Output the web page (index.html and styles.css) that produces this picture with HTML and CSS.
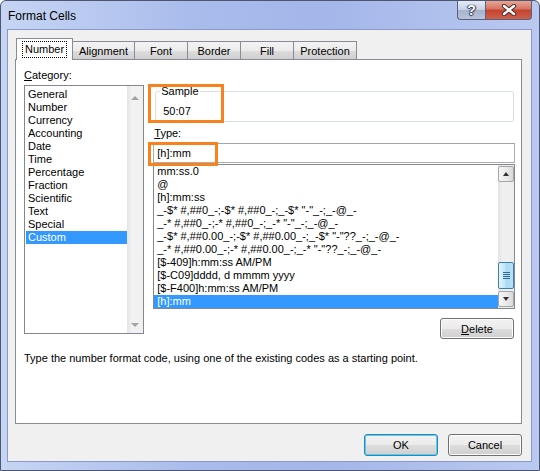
FILE: index.html
```html
<!DOCTYPE html>
<html>
<head>
    <title>Format Cells</title>
    <link rel="stylesheet" href="styles.css">
</head>
<body>
    <div class="window">
        <div class="titlebar">
            <span class="title">Format Cells</span>
            <div class="caption-buttons">
                <div class="cap help">?</div>
                <div class="cap close">
                    <svg width="16" height="12" viewBox="0 0 16 12">
                        <path d="M3 2 L13 10 M13 2 L3 10" stroke="#4a2a26" stroke-width="4.4" stroke-linecap="round"/>
                        <path d="M3 2 L13 10 M13 2 L3 10" stroke="#ffffff" stroke-width="2.4" stroke-linecap="round"/>
                    </svg>
                </div>
            </div>
        </div>

        <div class="client">
            <div class="tabs">
                <div class="tab active"><span class="focus">Number</span></div>
                <div class="tab w-align">Alignment</div>
                <div class="tab w-font">Font</div>
                <div class="tab w-font">Border</div>
                <div class="tab w-font">Fill</div>
                <div class="tab w-prot">Protection</div>
            </div>

            <div class="panel">
                <div class="columns">
                    <div class="left">
                        <div class="label"><u>C</u>ategory:</div>
                        <div class="cat-list">
                            <div class="items">
                                <div class="item">General</div>
                                <div class="item">Number</div>
                                <div class="item">Currency</div>
                                <div class="item">Accounting</div>
                                <div class="item">Date</div>
                                <div class="item">Time</div>
                                <div class="item">Percentage</div>
                                <div class="item">Fraction</div>
                                <div class="item">Scientific</div>
                                <div class="item">Text</div>
                                <div class="item">Special</div>
                                <div class="item selected">Custom</div>
                            </div>
                            <div class="scroll-off">
                                <span class="arrow-up grey"></span>
                                <span class="arrow-down grey"></span>
                            </div>
                        </div>
                    </div>

                    <div class="right">
                        <div class="group">
                            <div class="legend">Sample</div>
                            <div class="sample">50:07</div>
                        </div>
                        <div class="label type-label"><u>T</u>ype:</div>
                        <div class="type-input">[h]:mm</div>
                        <div class="fmt-list">
                            <div class="items">
                                <div class="item">mm:ss.0</div>
                                <div class="item">@</div>
                                <div class="item">[h]:mm:ss</div>
                                <div class="item">_-$* #,##0_-;-$* #,##0_-;_-$* "-"_-;_-@_-</div>
                                <div class="item">_-* #,##0_-;-* #,##0_-;_-* "-"_-;_-@_-</div>
                                <div class="item">_-$* #,##0.00_-;-$* #,##0.00_-;_-$* "-"??_-;_-@_-</div>
                                <div class="item">_-* #,##0.00_-;-* #,##0.00_-;_-* "-"??_-;_-@_-</div>
                                <div class="item">[$-409]h:mm:ss AM/PM</div>
                                <div class="item">[$-C09]dddd, d mmmm yyyy</div>
                                <div class="item">[$-F400]h:mm:ss AM/PM</div>
                                <div class="item selected">[h]:mm</div>
                            </div>
                            <div class="scrollbar">
                                <div class="sb-btn"><span class="arrow-up"></span></div>
                                <div class="sb-track">
                                    <div class="thumb"><span class="grip"></span></div>
                                </div>
                                <div class="sb-btn"><span class="arrow-down"></span></div>
                            </div>
                        </div>
                        <div class="delete-row">
                            <button class="btn delete"><u>D</u>elete</button>
                        </div>

                        <div class="mark mark-sample"></div>
                        <div class="mark mark-type"></div>
                    </div>
                </div>
                <p class="desc">Type the number format code, using one of the existing codes as a starting point.</p>
            </div>

            <div class="footer">
                <button class="btn default">OK</button>
                <button class="btn">Cancel</button>
            </div>
        </div>
    </div>
</body>
</html>
```

FILE: styles.css
```css
body {
    margin: 0;
    font-family: "Liberation Sans", Arial, sans-serif;
    font-size: 11px;
    color: #000;
    background: #fff;
}
.window {
    width: 540px;
    height: 471px;
    box-sizing: border-box;
    display: flex;
    flex-direction: column;
    border: 1px solid #4c5670;
    border-radius: 6px 6px 0 0;
    background: linear-gradient(90deg, #c6d5f3 0%, #aabcec 35%, #a4b6ea 60%, #b9c9f0 100%);
    overflow: hidden;
}
.titlebar {
    height: 28px;
    display: flex;
    align-items: flex-start;
}
.title {
    font-size: 12px;
    margin: 8px 0 0 7px;
    color: #000;
}
.caption-buttons {
    margin-left: auto;
    margin-right: 7px;
    display: flex;
}
.cap {
    height: 19px;
    box-sizing: border-box;
    border: 1px solid #59627a;
    border-top: none;
    display: flex;
    align-items: center;
    justify-content: center;
}
.help {
    width: 28px;
    border-radius: 0 0 0 4px;
    border-right: none;
    background: linear-gradient(#e6ebf6 0%, #c7d0e4 50%, #a6b2cc 51%, #b9c4dc 100%);
    color: #fff;
    font-weight: bold;
    font-size: 14px;
    text-shadow: 0 0 1px #2c3446, 1px 0 1px #2c3446, -1px 0 1px #2c3446, 0 1px 1px #2c3446;
}
.close {
    width: 47px;
    border-radius: 0 0 4px 0;
    background: linear-gradient(#e8a595 0%, #d57462 45%, #c5432f 50%, #d0604c 100%);
}
.client {
    flex: 1;
    margin: 0 7px 8px 6px;
    padding: 7px 9px 0 7px;
    background: #f0f0f0;
    border: 1px solid #8a9ac7;
    display: flex;
    flex-direction: column;
}
.tabs {
    display: flex;
    align-items: flex-end;
    height: 22px;
    padding-left: 1px;
    position: relative;
    z-index: 1;
}
.tab {
    height: 18px;
    box-sizing: border-box;
    border: 1px solid #898c95;
    border-bottom: none;
    margin-left: -1px;
    background: linear-gradient(#f3f3f3 0%, #ebebeb 50%, #dddddd 51%, #cfcfcf 100%);
    display: flex;
    align-items: center;
    justify-content: center;
}
.tab.active {
    width: 57px;
    height: 22px;
    margin-left: 0;
    margin-bottom: -1px;
    background: #fff;
    align-items: flex-start;
    padding-top: 3px;
}
.focus {
    outline: 1px dotted #000;
    padding: 1px 2px;
    line-height: 13px;
}
.w-align { width: 63px; }
.w-font { width: 54px; }
.w-prot { width: 64px; }

.panel {
    height: 365px;
    box-sizing: border-box;
    border: 1px solid #898c95;
    background: #fff;
    padding: 9px 6px 0 8px;
}
.columns {
    display: flex;
    gap: 9px;
}
.label {
    line-height: 13px;
}
.left {
    width: 121px;
}
.cat-list {
    margin-top: 3px;
    height: 249px;
    box-sizing: border-box;
    border: 1px solid #828790;
    display: flex;
}
.items {
    flex: 1;
    padding-top: 2px;
}
.item {
    line-height: 13px;
    height: 13px;
    padding-left: 2px;
    white-space: nowrap;
    overflow: hidden;
}
.cat-list .item {
    margin-left: 1px;
}
.item.selected {
    background: #3399ff;
    color: #fff;
}
.scroll-off {
    width: 16px;
    background: linear-gradient(90deg, #e4e4e4, #f2f2f2 30%, #f0f0f0);
    display: flex;
    flex-direction: column;
    justify-content: space-between;
    align-items: center;
    padding: 10px 0 6px;
}
.arrow-up, .arrow-down {
    width: 0;
    height: 0;
    border-left: 4px solid transparent;
    border-right: 4px solid transparent;
}
.arrow-up { border-bottom: 4px solid #4d4d4d; }
.arrow-down { border-top: 4px solid #4d4d4d; }
.arrow-up.grey { border-bottom-color: #a3a3a3; }
.arrow-down.grey { border-top-color: #a3a3a3; }

.right {
    width: 364px;
    position: relative;
}
.group {
    margin: 22px 1px 0 2px;
    border: 1px solid #d5dfe5;
    border-radius: 3px;
    padding: 0 0 3px 4px;
}
.legend {
    width: max-content;
    margin-top: -7px;
    padding: 0 1px;
    background: #fff;
    line-height: 13px;
}
.sample {
    line-height: 13px;
    margin: 7px 0 0 3px;
}
.type-label {
    margin-top: 5px;
    padding-left: 1px;
}
.type-input {
    margin-top: 3px;
    height: 20px;
    box-sizing: border-box;
    border: 1px solid #abadb3;
    border-top-color: #a2a4ab;
    padding: 3px 3px;
    line-height: 13px;
}
.fmt-list {
    margin-top: 1px;
    height: 145px;
    box-sizing: border-box;
    border: 1px solid #828790;
    display: flex;
}
.fmt-list .items {
    padding-top: 0;
    overflow: hidden;
}
.fmt-list .item {
    padding-left: 3px;
}
.scrollbar {
    width: 16px;
    padding: 1px 0;
    display: flex;
    flex-direction: column;
    background: linear-gradient(90deg, #e3e3e3, #f0f0f0 30%, #eeeeee);
}
.sb-btn {
    height: 16px;
    box-sizing: border-box;
    border: 1px solid #a6a6a6;
    border-radius: 2px;
    background: linear-gradient(90deg, #f6f6f6, #e8e8e8 60%, #d9d9d9);
    display: flex;
    align-items: center;
    justify-content: center;
}
.sb-btn .arrow-up { border-bottom-color: #333; border-width: 0 3px 4px; }
.sb-btn .arrow-down { border-top-color: #333; border-width: 4px 3px 0; }
.sb-track {
    flex: 1;
}
.thumb {
    margin-top: 80px;
    height: 27px;
    box-sizing: border-box;
    border: 1px solid #3c7fb1;
    border-radius: 2px;
    background: linear-gradient(90deg, #e3f4fc, #c2e4f8 45%, #a9d9f4 50%, #b9e1f7);
    display: flex;
    align-items: center;
    justify-content: center;
}
.grip {
    width: 7px;
    height: 7px;
    background: repeating-linear-gradient(#2f6c94 0 1px, transparent 1px 2px);
}
.delete-row {
    display: flex;
    justify-content: flex-end;
    margin-top: 9px;
    padding-right: 1px;
}
.btn {
    font-family: inherit;
    font-size: 11px;
    height: 21px;
    border: 1px solid #707070;
    border-radius: 3px;
    background: linear-gradient(#f2f2f2 0%, #ebebeb 50%, #dddddd 51%, #cfcfcf 100%);
    box-shadow: inset 0 0 0 1px #fcfcfc;
    color: #000;
    padding: 0;
}
.delete {
    width: 74px;
}
.mark {
    position: absolute;
    border: 3px solid #f7821e;
    box-sizing: border-box;
}
.mark-sample {
    left: -5px;
    top: 15px;
    width: 76px;
    height: 39px;
}
.mark-type {
    left: -5px;
    top: 73px;
    width: 70px;
    height: 24px;
}
.desc {
    margin: 13px 0 0;
    line-height: 13px;
}
.footer {
    display: flex;
    justify-content: flex-end;
    gap: 10px;
    margin-top: 10px;
    padding-right: 0;
}
.footer .btn {
    width: 74px;
    height: 22px;
}
.footer .default {
    border-color: #3c7fb1;
    box-shadow: inset 0 0 0 1px #48d3fb;
}
```
